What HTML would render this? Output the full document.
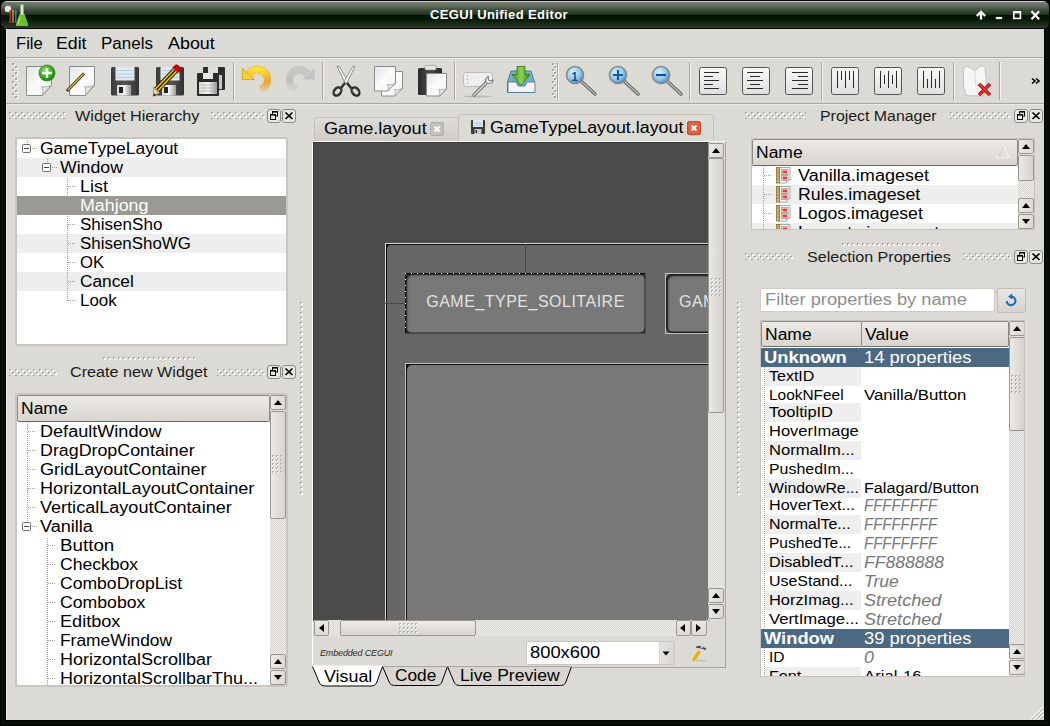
<!DOCTYPE html>
<html><head><meta charset="utf-8">
<style>
*{box-sizing:border-box;margin:0;padding:0}
html,body{width:1050px;height:726px;overflow:hidden;background:#021302;font-family:"Liberation Sans",sans-serif;color:#000}
.a{position:absolute}
#title{left:1px;top:1px;width:1048px;height:27px;border-radius:6px 6px 5px 5px;
 background:linear-gradient(#cfd4cb 0px,#cfd4cb 1px,#717d6f 1px,#606c5e 5px,#3c4c3a 9px,#243622 13px,#1e301c 14px,#001400 14px,#061806 18px,#1a2c18 23px,#2a3c28 27px)}
#ttext{left:430px;top:7px;color:#fff;font-weight:bold;font-size:13px;letter-spacing:0.4px}
#content{left:6px;top:29px;width:1038px;height:691px;background:#dcdad5;border-left:1px solid #efeeea;box-shadow:0 0 0 1px #000}
.t{font-size:15px;letter-spacing:1.35px;white-space:nowrap;line-height:19px}
.menu{top:34px;font-size:16px;white-space:nowrap;line-height:19px}
.hline{height:1px}
.vsep{width:2px;height:38px;top:62px;border-left:1px solid #a9a59f;border-right:1px solid #f4f3f1}
.grip{background-image:radial-gradient(circle at 50% 50%,#fff 0.8px,transparent 1px)}

.tree{background:#fff;border:1px solid #c6c3bd;box-shadow:inset 0 0 0 0 #000;overflow:hidden}
.row{position:absolute;left:0;height:19px;width:100%}
.alt{background:#eeeeee}
.tt{position:absolute;font-size:16px;line-height:19px;white-space:nowrap;top:0}
.dtitle{font-size:14px;line-height:17px;white-space:nowrap;color:#1a1a1a}
.dbtn{width:14px;height:14px;border:1px solid #8d8b87;border-radius:3px;background:#e9e7e3}
.exp{position:absolute;width:9px;height:9px;border:1px solid #6e6e6e;border-radius:1.5px;background:#fff}
.exp:after{content:"";position:absolute;left:1px;top:3px;width:5px;height:1px;background:#444}
.dv{position:absolute;width:1px;background-image:linear-gradient(#a0a0a0 50%,transparent 50%);background-size:1px 2px}
.dh{position:absolute;height:1px;background-image:linear-gradient(90deg,#a0a0a0 50%,transparent 50%);background-size:2px 1px}
.hdr{position:absolute;height:26px;background:linear-gradient(#ebe9e5,#d9d6d0);border:1px solid #8e8b85;border-bottom-color:#6e6b66;border-radius:2px}
.sb{position:absolute;width:16px;background:repeating-conic-gradient(#d8d6d1 0 25%,#eeece9 0 50%) 0 0/2px 2px}
.sbb{position:absolute;left:0;width:16px;height:15px;border:1px solid #9a9790;border-radius:2px;background:linear-gradient(90deg,#ebe9e5,#dcd9d3)}
.thumb{position:absolute;left:0;width:16px;border:1px solid #9a9790;border-radius:2px;background:linear-gradient(90deg,#ebe9e5,#d6d3cd)}
.up:after,.dn:after{content:"";position:absolute;left:3px;border-left:4px solid transparent;border-right:4px solid transparent}
.up:after{top:4px;border-bottom:5px solid #000}
.dn:after{top:4px;border-top:5px solid #000}
</style></head><body>
<div class="a" style="left:0;top:0;width:1050px;height:726px;border:1px solid #000"></div>
<div id="title" class="a"></div>
<div id="ttext" class="a">CEGUI Unified Editor</div>
<svg class="a" style="left:0px;top:0px" width="32" height="29"><circle cx="8" cy="9" r="3.2" fill="#e6e6e6"/><path d="M10.2 10v12" stroke="#b83a2a" stroke-width="1.4"/><path d="M13 10v12" stroke="#c8a840" stroke-width="1.4"/><path d="M15.8 10v12" stroke="#5a78b0" stroke-width="1.4"/><path d="M8.5 22.5h9" stroke="#7a4a20" stroke-width="0.8"/><path d="M20.5 4.5h3v8.5l4.5 12.5h-12l4.5-12.5z" fill="#dfe8d8" stroke="#7aa860" stroke-width="0.7"/><path d="M19.3 14.5h5.4l3.4 11h-12.2z" fill="#6cc02a"/><path d="M18 24.5l2-8" stroke="#c8f0a0" stroke-width="0.8"/></svg>
<svg class="a" style="left:970px;top:5px" width="80" height="20"><path d="M11 14.5V7.5M6.8 11L11 6.8l4.2 4.2" stroke="#fff" stroke-width="2.3" fill="none"/><path d="M25.8 13h6.4" stroke="#fff" stroke-width="2.2"/><rect x="43.8" y="6.8" width="6.6" height="6.6" fill="none" stroke="#fff" stroke-width="1.6"/><path d="M43.5 7.3h7.2" stroke="#fff" stroke-width="2"/><path d="M61.5 6.2l7.6 8M69.1 6.2l-7.6 8" stroke="#fff" stroke-width="2.2"/></svg>
<div id="content" class="a"></div>
<div class="a menu" style="left:16px;transform:scaleX(1.0385);transform-origin:0 0">File</div>
<div class="a menu" style="left:56px;transform:scaleX(1.1071);transform-origin:0 0">Edit</div>
<div class="a menu" style="left:101px;transform:scaleX(1.0612);transform-origin:0 0">Panels</div>
<div class="a menu" style="left:168px;transform:scaleX(1.119);transform-origin:0 0">About</div>
<div class="a hline" style="left:6px;top:57px;width:1038px;background:#aaa6a0"></div>
<div class="a hline" style="left:6px;top:58px;width:1038px;background:#eceae6"></div>
<div class="a hline" style="left:6px;top:103px;width:1038px;background:#aaa6a0"></div>
<div class="a hline" style="left:6px;top:104px;width:1038px;background:#eceae6"></div>
<div class="a vsep" style="left:233px"></div>
<div class="a vsep" style="left:322px"></div>
<div class="a vsep" style="left:454px"></div>
<div class="a vsep" style="left:557px"></div>
<div class="a vsep" style="left:689px"></div>
<div class="a vsep" style="left:821px"></div>
<div class="a vsep" style="left:953px"></div>
<div class="a vsep" style="left:999px"></div>
<svg class="a" style="left:0;top:0" width="1050" height="110" viewBox="0 0 1050 110">
<defs>
 <linearGradient id="pg" x1="0" y1="0" x2="1" y2="1"><stop offset="0" stop-color="#e2e4e6"/><stop offset="0.5" stop-color="#fbfbfb"/><stop offset="1" stop-color="#f2f2f2"/></linearGradient>
 <radialGradient id="gr" cx="0.4" cy="0.35" r="0.7"><stop offset="0" stop-color="#8fe36a"/><stop offset="0.6" stop-color="#3aa81e"/><stop offset="1" stop-color="#1d7a0c"/></radialGradient>
 <linearGradient id="fl" x1="0" y1="0" x2="1" y2="0"><stop offset="0" stop-color="#3b3b3b"/><stop offset="0.5" stop-color="#555"/><stop offset="1" stop-color="#333"/></linearGradient>
 <linearGradient id="sh" x1="0" y1="0" x2="1" y2="0"><stop offset="0" stop-color="#d8d8d8"/><stop offset="0.5" stop-color="#f4f4f4"/><stop offset="1" stop-color="#9a9a9a"/></linearGradient>
 <linearGradient id="yl" x1="0" y1="0" x2="1" y2="1"><stop offset="0" stop-color="#fbe76a"/><stop offset="0.6" stop-color="#f0b838"/><stop offset="1" stop-color="#e8a020" stop-opacity="0"/></linearGradient>
 <linearGradient id="gy" x1="0" y1="0" x2="0" y2="1"><stop offset="0" stop-color="#c4c4c4"/><stop offset="1" stop-color="#c8c8c8" stop-opacity="0.2"/></linearGradient>
 <radialGradient id="bl" cx="0.4" cy="0.35" r="0.7"><stop offset="0" stop-color="#e2f4fc"/><stop offset="0.6" stop-color="#8cc8ea"/><stop offset="1" stop-color="#3d7fc0"/></radialGradient>
 <linearGradient id="btn" x1="0" y1="0" x2="0" y2="1"><stop offset="0" stop-color="#fafafa"/><stop offset="1" stop-color="#dedede"/></linearGradient>
 <linearGradient id="grn" x1="0" y1="0" x2="1" y2="0"><stop offset="0" stop-color="#3f8f1a"/><stop offset="0.5" stop-color="#8ed44e"/><stop offset="1" stop-color="#3f8f1a"/></linearGradient>
</defs>
<!-- grip 1 -->
<g fill="#fff"><rect x="13" y="64" width="2" height="2"/><rect x="16" y="67" width="2" height="2"/><rect x="13" y="70" width="2" height="2"/><rect x="16" y="73" width="2" height="2"/><rect x="13" y="76" width="2" height="2"/><rect x="16" y="79" width="2" height="2"/><rect x="13" y="82" width="2" height="2"/><rect x="16" y="85" width="2" height="2"/><rect x="13" y="88" width="2" height="2"/><rect x="16" y="91" width="2" height="2"/><rect x="13" y="94" width="2" height="2"/><rect x="16" y="97" width="2" height="2"/></g>
<g fill="#a8a49e"><rect x="12" y="63" width="2" height="2"/><rect x="15" y="66" width="2" height="2"/><rect x="12" y="69" width="2" height="2"/><rect x="15" y="72" width="2" height="2"/><rect x="12" y="75" width="2" height="2"/><rect x="15" y="78" width="2" height="2"/><rect x="12" y="81" width="2" height="2"/><rect x="15" y="84" width="2" height="2"/><rect x="12" y="87" width="2" height="2"/><rect x="15" y="90" width="2" height="2"/><rect x="12" y="93" width="2" height="2"/><rect x="15" y="96" width="2" height="2"/></g>
<!-- new -->
<path d="M26.5 66.5h25v19l-9 10h-16z" fill="url(#pg)" stroke="#8a8a8a"/>
<path d="M42.5 95.5c1-4 0-8 -1-9c3 1 7 0 9-1z" fill="#e6e6e6" stroke="#9a9a9a" stroke-width="0.8"/>
<circle cx="47" cy="73" r="8" fill="url(#gr)" stroke="#1b6e0b" stroke-width="0.6"/>
<path d="M47 68v10M42 73h10" stroke="#fff" stroke-width="2.4"/>
<!-- edit -->
<path d="M69.5 66.5h25v19l-9 10h-16z" fill="url(#pg)" stroke="#8a8a8a"/>
<path d="M85.5 95.5c1-4 0-8 -1-9c3 1 7 0 9-1z" fill="#e6e6e6" stroke="#9a9a9a" stroke-width="0.8"/>
<path d="M67 91L84 73.5" stroke="#3a3010" stroke-width="3"/>
<path d="M68 90L83.5 74" stroke="#d8b040" stroke-width="1.4"/>
<!-- save -->
<g id="fsave">
<rect x="111" y="67" width="28" height="28.5" rx="1.5" fill="url(#fl)"/>
<rect x="115.5" y="67" width="19" height="13.5" fill="#dfe9f3"/>
<path d="M117 70.5h16M117 74h16M117 77.5h16" stroke="#a9bdd4" stroke-width="0.8"/>
<rect x="117" y="85" width="14" height="10.5" fill="url(#sh)"/>
<rect x="119" y="87" width="4" height="6" fill="#222"/>
</g>
<!-- save as -->
<g transform="translate(45 0)">
<rect x="111" y="67" width="28" height="28.5" rx="1.5" fill="url(#fl)"/>
<rect x="115.5" y="67" width="19" height="13.5" fill="#dfe9f3"/>
<path d="M117 70.5h16M117 74h16M117 77.5h16" stroke="#a9bdd4" stroke-width="0.8"/>
<rect x="117" y="85" width="14" height="10.5" fill="url(#sh)"/>
<rect x="119" y="87" width="4" height="6" fill="#222"/>
</g>
<path d="M156.5 90L175.5 70" stroke="#2a2200" stroke-width="6.4" stroke-linecap="butt"/>
<path d="M156.5 90L175.5 70" stroke="#f5c800" stroke-width="4.6"/>
<path d="M156.5 90L175.5 70" stroke="#1a1a1a" stroke-width="1.4"/>
<path d="M172.6 67.2l5.8 5.6l2.2-2.4c0.8-1 0.6-2.2-0.3-3l-2.2-2.1c-0.9-0.8-2.1-0.8-2.9 0z" fill="#d40000" stroke="#900" stroke-width="0.5"/>
<path d="M153.6 87.2l6.2 5.9l-6.6 3z" fill="#e8d0a0" stroke="#555" stroke-width="0.5"/>
<path d="M153 96.5l1.2-3.2l2 1.9z" fill="#222"/>
<!-- save all -->
<rect x="203" y="67" width="22" height="23" rx="1" fill="#2e2e2e"/>
<rect x="208" y="67" width="10" height="6" fill="#ddd"/>
<rect x="214" y="75" width="8" height="14" fill="#c8c8c8"/>
<rect x="197" y="73" width="22" height="23" rx="1" fill="#2b2b2b"/>
<rect x="203" y="73" width="10" height="6" fill="#e6e6e6"/>
<rect x="199" y="82" width="18" height="12" fill="url(#sh)"/>
<path d="M201 85h14M201 88h14M201 91h14" stroke="#999" stroke-width="0.6"/>
<!-- undo -->
<linearGradient id="ug" x1="0" y1="66" x2="0" y2="96" gradientUnits="userSpaceOnUse"><stop offset="0" stop-color="#fce94f"/><stop offset="0.3" stop-color="#f5c92e"/><stop offset="0.55" stop-color="#eea22a" stop-opacity="0.95"/><stop offset="0.8" stop-color="#eeb050" stop-opacity="0.4"/><stop offset="1" stop-color="#f0c060" stop-opacity="0"/></linearGradient>
<linearGradient id="rg" x1="0" y1="66" x2="0" y2="96" gradientUnits="userSpaceOnUse"><stop offset="0" stop-color="#c8c8c8"/><stop offset="0.5" stop-color="#bdbdbd" stop-opacity="0.9"/><stop offset="0.8" stop-color="#c4c4c4" stop-opacity="0.35"/><stop offset="1" stop-color="#ccc" stop-opacity="0"/></linearGradient>
<g id="undoShape">
<path d="M246.5 71.5A13.5 13.5 0 0 1 271 80.5A13.5 13.5 0 0 1 262 93L259 86A6.5 6.5 0 0 0 264 80A6.5 6.5 0 0 0 252.5 76.5Z" fill="url(#ug)"/>
<path d="M242.3 68.3L242.3 79.6L254.5 79.6Z" fill="#f4d030" stroke="#c89a08" stroke-width="0.7"/>
<path d="M246.5 71.5A13.5 13.5 0 0 1 270.5 78" fill="none" stroke="#c89010" stroke-width="0.6" opacity="0.7"/>
</g>
<g transform="translate(557 0) scale(-1 1)">
<path d="M246.5 71.5A13.5 13.5 0 0 1 271 80.5A13.5 13.5 0 0 1 262 93L259 86A6.5 6.5 0 0 0 264 80A6.5 6.5 0 0 0 252.5 76.5Z" fill="url(#rg)"/>
<path d="M242.3 68.3L242.3 79.6L254.5 79.6Z" fill="#c2c2c2"/>
</g>
<!-- cut -->
<path d="M337 66.2L339.3 66.8L348 81.5L345.3 83.5Z" fill="#fdfdfd" stroke="#666" stroke-width="0.7"/>
<path d="M355 66.2L352.7 66.8L344 81.5L346.7 83.5Z" fill="#fdfdfd" stroke="#666" stroke-width="0.7"/>
<path d="M345 83L340.5 88.5M347 83L351.5 88.5" stroke="#333" stroke-width="2.6"/>
<ellipse cx="337.5" cy="91.5" rx="4.6" ry="3.3" fill="none" stroke="#333" stroke-width="2.4" transform="rotate(-50 337.5 91.5)"/>
<ellipse cx="355.5" cy="91.5" rx="4.6" ry="3.3" fill="none" stroke="#333" stroke-width="2.4" transform="rotate(50 355.5 91.5)"/>
<!-- copy -->
<path d="M381.5 71.5h21v17l-7.5 7.5h-13.5z" fill="url(#pg)" stroke="#8a8a8a"/>
<path d="M395 96c0.8-3 0-5.5-0.8-6.5c2.5 0.6 5.5 0 7.8-1z" fill="#e6e6e6" stroke="#9a9a9a" stroke-width="0.7"/>
<path d="M374.5 66.5h21v17l-7.5 7.5h-13.5z" fill="url(#pg)" stroke="#8a8a8a"/>
<path d="M388 91c0.8-3 0-5.5-0.8-6.5c2.5 0.6 5.5 0 7.8-1z" fill="#e6e6e6" stroke="#9a9a9a" stroke-width="0.7"/>
<!-- paste -->
<linearGradient id="cb" x1="0" y1="0" x2="1" y2="0"><stop offset="0" stop-color="#2a2a2a"/><stop offset="0.5" stop-color="#4a4a4a"/><stop offset="1" stop-color="#2a2a2a"/></linearGradient>
<rect x="418" y="68" width="24" height="27" rx="1.5" fill="url(#cb)"/>
<rect x="425" y="65.5" width="11" height="4.5" rx="1" fill="#e8e8e8" stroke="#8a8a8a" stroke-width="0.6"/>
<path d="M426.5 73.5h20v15.5l-6.5 7h-13.5z" fill="url(#pg)" stroke="#8a8a8a"/>
<path d="M439.5 96c0.8-3 0-5.5-0.8-6.5c2.5 0.6 5.5 0 7.8-1z" fill="#e6e6e6" stroke="#9a9a9a" stroke-width="0.7"/>
<!-- props/wrench -->
<rect x="463.5" y="72.5" width="29" height="14" rx="2.5" fill="#eeeeee" stroke="#bdbdbd"/>
<g fill="#888"><circle cx="467.5" cy="76" r="0.6"/><circle cx="467.5" cy="79.5" r="0.6"/><circle cx="467.5" cy="83" r="0.6"/></g>
<ellipse cx="478" cy="96.5" rx="14" ry="1" fill="#000" opacity="0.15"/>
<path d="M474 95l13.5-13.5" stroke="#6a6a6a" stroke-width="3.2" stroke-linecap="round"/>
<path d="M474 95l13.5-13.5" stroke="#e8e8e8" stroke-width="1.4" stroke-linecap="round"/>
<path d="M486.2 82.8a4.6 4.6 0 0 1 2.2-6.6l-0.2 3.2l2 1.6l3-1.2a4.6 4.6 0 0 1-6.6 3.6" fill="#e6e6e6" stroke="#6a6a6a" stroke-width="1"/>
<!-- import -->
<path d="M511 71h20l3.5 11v10.5h-27v-10.5z" fill="#6fb0c8" stroke="#40708a" stroke-width="0.8"/>
<path d="M508 82h8l2 4h7l2-4h8v10.5h-27z" fill="#f4f4f4" stroke="#40708a" stroke-width="0.8"/>
<path d="M517 66.5h8v8h5l-9 11l-9-11h5z" fill="url(#grn)" stroke="#2f6e10" stroke-width="0.8"/>
<!-- grip 2 -->
<g fill="#fff"><rect x="553" y="64" width="2" height="2"/><rect x="555" y="67" width="2" height="2"/><rect x="553" y="70" width="2" height="2"/><rect x="555" y="73" width="2" height="2"/><rect x="553" y="76" width="2" height="2"/><rect x="555" y="79" width="2" height="2"/><rect x="553" y="82" width="2" height="2"/><rect x="555" y="85" width="2" height="2"/><rect x="553" y="88" width="2" height="2"/><rect x="555" y="91" width="2" height="2"/><rect x="553" y="94" width="2" height="2"/><rect x="555" y="97" width="2" height="2"/></g>
<g fill="#a8a49e"><rect x="552" y="63" width="2" height="2"/><rect x="554" y="66" width="2" height="2"/><rect x="552" y="69" width="2" height="2"/><rect x="554" y="72" width="2" height="2"/><rect x="552" y="75" width="2" height="2"/><rect x="554" y="78" width="2" height="2"/><rect x="552" y="81" width="2" height="2"/><rect x="554" y="84" width="2" height="2"/><rect x="552" y="87" width="2" height="2"/><rect x="554" y="90" width="2" height="2"/><rect x="552" y="93" width="2" height="2"/><rect x="554" y="96" width="2" height="2"/></g>
<!-- zoom -->
<g id="zm">
<path d="M581 81l14 13" stroke="#666" stroke-width="3.4" stroke-linecap="round"/>
<path d="M581 81l14 13" stroke="#bbb" stroke-width="1.4" stroke-linecap="round"/>
<circle cx="575" cy="75" r="8.5" fill="url(#bl)" stroke="#8a8a8a" stroke-width="1.6"/>
</g>
<text x="571.3" y="80.5" font-family="Liberation Sans" font-weight="bold" font-size="12" fill="#1a4f9a">1</text>
<g transform="translate(43 0)">
<path d="M581 81l14 13" stroke="#666" stroke-width="3.4" stroke-linecap="round"/>
<path d="M581 81l14 13" stroke="#bbb" stroke-width="1.4" stroke-linecap="round"/>
<circle cx="575" cy="75" r="8.5" fill="url(#bl)" stroke="#8a8a8a" stroke-width="1.6"/>
</g>
<path d="M618 70v10M613 75h10" stroke="#1a55a0" stroke-width="2.2"/>
<g transform="translate(86 0)">
<path d="M581 81l14 13" stroke="#666" stroke-width="3.4" stroke-linecap="round"/>
<path d="M581 81l14 13" stroke="#bbb" stroke-width="1.4" stroke-linecap="round"/>
<circle cx="575" cy="75" r="8.5" fill="url(#bl)" stroke="#8a8a8a" stroke-width="1.6"/>
</g>
<path d="M656 75h10" stroke="#1a4f9a" stroke-width="2.2"/>
<!-- align buttons -->
<g id="ab"><rect x="699.5" y="67.5" width="27" height="27" rx="2" fill="url(#btn)" stroke="#555" stroke-width="1"/></g>
<path d="M704 72.5h15M704 76.5h9M704 80.5h15M704 84.5h9M704 88.5h15" stroke="#2a2a2a" stroke-width="1"/>
<g transform="translate(43 0)"><rect x="699.5" y="67.5" width="27" height="27" rx="2" fill="url(#btn)" stroke="#555" stroke-width="1"/></g>
<path d="M747 72.5h16M750 76.5h10M747 80.5h16M750 84.5h10M747 88.5h16" stroke="#2a2a2a" stroke-width="1"/>
<g transform="translate(86 0)"><rect x="699.5" y="67.5" width="27" height="27" rx="2" fill="url(#btn)" stroke="#555" stroke-width="1"/></g>
<path d="M792 72.5h16M798 76.5h10M792 80.5h16M798 84.5h10M792 88.5h16" stroke="#2a2a2a" stroke-width="1"/>
<g transform="translate(132 0)"><rect x="699.5" y="67.5" width="27" height="27" rx="2" fill="url(#btn)" stroke="#555" stroke-width="1"/></g>
<path d="M837.5 71v17M841.5 71v9M845.5 71v17M849.5 71v9M853.5 71v17" stroke="#2a2a2a" stroke-width="1"/>
<g transform="translate(175 0)"><rect x="699.5" y="67.5" width="27" height="27" rx="2" fill="url(#btn)" stroke="#555" stroke-width="1"/></g>
<path d="M880.5 71v17M884.5 75v9M888.5 71v17M892.5 75v9M896.5 71v17" stroke="#2a2a2a" stroke-width="1"/>
<g transform="translate(218 0)"><rect x="699.5" y="67.5" width="27" height="27" rx="2" fill="url(#btn)" stroke="#555" stroke-width="1"/></g>
<path d="M923.5 71v17M927.5 79v9M931.5 71v17M935.5 79v9M939.5 71v17" stroke="#2a2a2a" stroke-width="1"/>
<!-- delete -->
<path d="M963.5 68.5L967 66L974.5 70.5L982 65.5L985 67.5L986.5 85L983.5 96L966.5 95.5L963.5 86Z" fill="#f6f6f6" stroke="#b8b8b8" stroke-width="0.8"/>
<path d="M974.5 71L976 86" stroke="#dedede" stroke-width="1"/>
<path d="M979 84l11 11M990 84l-11 11" stroke="#c01010" stroke-width="3.6"/>
<path d="M979 84l11 11M990 84l-11 11" stroke="#e83030" stroke-width="1.6"/>
<!-- chevron -->
<path d="M1032 78.5l3 2.5l-3 2.5M1036 78.5l3 2.5l-3 2.5" stroke="#000" stroke-width="1.6" fill="none"/>
</svg>

<svg class="a" style="left:9px;top:112px" width="56" height="7"><defs><pattern id="gp9_112" patternUnits="userSpaceOnUse" width="6" height="6"><rect x="0" y="0" width="2" height="2" fill="#a9a6a0"/><rect x="1" y="1" width="2" height="2" fill="#fff"/><rect x="3" y="3" width="2" height="2" fill="#a9a6a0"/><rect x="4" y="4" width="2" height="2" fill="#fff"/></pattern></defs><rect width="56" height="7" fill="url(#gp9_112)"/></svg>
<div class="a dtitle" style="left:75px;top:108px;transform:scaleX(1.1591);transform-origin:0 0">Widget Hierarchy</div>
<svg class="a" style="left:211px;top:112px" width="54" height="7"><defs><pattern id="gp211_112" patternUnits="userSpaceOnUse" width="6" height="6"><rect x="0" y="0" width="2" height="2" fill="#a9a6a0"/><rect x="1" y="1" width="2" height="2" fill="#fff"/><rect x="3" y="3" width="2" height="2" fill="#a9a6a0"/><rect x="4" y="4" width="2" height="2" fill="#fff"/></pattern></defs><rect width="54" height="7" fill="url(#gp211_112)"/></svg>
<div class="a dbtn" style="left:267px;top:109px"></div><div class="a dbtn" style="left:282px;top:109px"></div><svg class="a" style="left:267px;top:109px" width="14" height="14"><rect x="5.5" y="2.5" width="5" height="4.5" fill="none" stroke="#000" stroke-width="1"/><rect x="5" y="2" width="6" height="1.6" fill="#000"/><rect x="3.5" y="5.5" width="5" height="5" fill="#ece9e4" stroke="#000" stroke-width="1"/><rect x="3" y="5" width="6" height="1.6" fill="#000"/></svg><svg class="a" style="left:282px;top:109px" width="14" height="14"><path d="M3.5 3.5l7 6.5M10.5 3.5l-7 6.5" stroke="#000" stroke-width="1.7"/></svg>
<div class="a tree" style="left:15px;top:137px;width:273px;height:209px;border-width:2px;border-color:#c9c6c0;border-radius:3px"><div style="position:absolute;left:-1px;top:0;width:270px;height:205px"><div class="row" style="top:0px"></div><div class="tt" style="left:24px;top:0px;color:#000;transform:scaleX(1.0945);transform-origin:0 0">GameTypeLayout</div><div class="row" style="top:19px;background:#eeeeee"></div><div class="tt" style="left:44px;top:19px;color:#000;transform:scaleX(1.1053);transform-origin:0 0">Window</div><div class="row" style="top:38px"></div><div class="tt" style="left:64px;top:38px;color:#000;transform:scaleX(1.12);transform-origin:0 0">List</div><div class="row" style="top:57px;background:#9b9994"></div><div class="tt" style="left:64px;top:57px;color:#fff;transform:scaleX(1.1148);transform-origin:0 0">Mahjong</div><div class="row" style="top:76px"></div><div class="tt" style="left:64px;top:76px;color:#000;transform:scaleX(1.0641);transform-origin:0 0">ShisenSho</div><div class="row" style="top:95px;background:#eeeeee"></div><div class="tt" style="left:64px;top:95px;color:#000;transform:scaleX(1.0571);transform-origin:0 0">ShisenShoWG</div><div class="row" style="top:114px"></div><div class="tt" style="left:64px;top:114px;color:#000;transform:scaleX(1.0435);transform-origin:0 0">OK</div><div class="row" style="top:133px;background:#eeeeee"></div><div class="tt" style="left:64px;top:133px;color:#000;transform:scaleX(1.08);transform-origin:0 0">Cancel</div><div class="row" style="top:152px"></div><div class="tt" style="left:64px;top:152px;color:#000;transform:scaleX(1.0556);transform-origin:0 0">Look</div><div class="dv" style="left:11px;top:1px;height:4px"></div><div class="exp" style="left:6px;top:5px"></div><div class="dh" style="left:16px;top:9px;width:5px"></div><div class="dv" style="left:31px;top:20px;height:4px"></div><div class="exp" style="left:26px;top:24px"></div><div class="dh" style="left:36px;top:28px;width:5px"></div><div class="dv" style="left:51px;top:39px;height:124px"></div><div class="dh" style="left:52px;top:47px;width:7px"></div><div class="dh" style="left:52px;top:66px;width:7px"></div><div class="dh" style="left:52px;top:85px;width:7px"></div><div class="dh" style="left:52px;top:104px;width:7px"></div><div class="dh" style="left:52px;top:123px;width:7px"></div><div class="dh" style="left:52px;top:142px;width:7px"></div><div class="dh" style="left:52px;top:161px;width:7px"></div></div></div>
<svg class="a" style="left:103px;top:357px" width="95" height="4"><rect x="0" y="0" width="2" height="2" fill="#a9a6a0"/><rect x="1" y="1" width="2" height="2" fill="#fff"/><rect x="5" y="0" width="2" height="2" fill="#a9a6a0"/><rect x="6" y="1" width="2" height="2" fill="#fff"/><rect x="10" y="0" width="2" height="2" fill="#a9a6a0"/><rect x="11" y="1" width="2" height="2" fill="#fff"/><rect x="15" y="0" width="2" height="2" fill="#a9a6a0"/><rect x="16" y="1" width="2" height="2" fill="#fff"/><rect x="20" y="0" width="2" height="2" fill="#a9a6a0"/><rect x="21" y="1" width="2" height="2" fill="#fff"/><rect x="25" y="0" width="2" height="2" fill="#a9a6a0"/><rect x="26" y="1" width="2" height="2" fill="#fff"/><rect x="30" y="0" width="2" height="2" fill="#a9a6a0"/><rect x="31" y="1" width="2" height="2" fill="#fff"/><rect x="35" y="0" width="2" height="2" fill="#a9a6a0"/><rect x="36" y="1" width="2" height="2" fill="#fff"/><rect x="40" y="0" width="2" height="2" fill="#a9a6a0"/><rect x="41" y="1" width="2" height="2" fill="#fff"/><rect x="45" y="0" width="2" height="2" fill="#a9a6a0"/><rect x="46" y="1" width="2" height="2" fill="#fff"/><rect x="50" y="0" width="2" height="2" fill="#a9a6a0"/><rect x="51" y="1" width="2" height="2" fill="#fff"/><rect x="55" y="0" width="2" height="2" fill="#a9a6a0"/><rect x="56" y="1" width="2" height="2" fill="#fff"/><rect x="60" y="0" width="2" height="2" fill="#a9a6a0"/><rect x="61" y="1" width="2" height="2" fill="#fff"/><rect x="65" y="0" width="2" height="2" fill="#a9a6a0"/><rect x="66" y="1" width="2" height="2" fill="#fff"/><rect x="70" y="0" width="2" height="2" fill="#a9a6a0"/><rect x="71" y="1" width="2" height="2" fill="#fff"/><rect x="75" y="0" width="2" height="2" fill="#a9a6a0"/><rect x="76" y="1" width="2" height="2" fill="#fff"/><rect x="80" y="0" width="2" height="2" fill="#a9a6a0"/><rect x="81" y="1" width="2" height="2" fill="#fff"/><rect x="85" y="0" width="2" height="2" fill="#a9a6a0"/><rect x="86" y="1" width="2" height="2" fill="#fff"/><rect x="90" y="0" width="2" height="2" fill="#a9a6a0"/><rect x="91" y="1" width="2" height="2" fill="#fff"/></svg>
<svg class="a" style="left:9px;top:369px" width="48" height="7"><defs><pattern id="gp9_369" patternUnits="userSpaceOnUse" width="6" height="6"><rect x="0" y="0" width="2" height="2" fill="#a9a6a0"/><rect x="1" y="1" width="2" height="2" fill="#fff"/><rect x="3" y="3" width="2" height="2" fill="#a9a6a0"/><rect x="4" y="4" width="2" height="2" fill="#fff"/></pattern></defs><rect width="48" height="7" fill="url(#gp9_369)"/></svg>
<div class="a dtitle" style="left:70px;top:364px;transform:scaleX(1.1542);transform-origin:0 0">Create new Widget</div>
<svg class="a" style="left:217px;top:369px" width="48" height="7"><defs><pattern id="gp217_369" patternUnits="userSpaceOnUse" width="6" height="6"><rect x="0" y="0" width="2" height="2" fill="#a9a6a0"/><rect x="1" y="1" width="2" height="2" fill="#fff"/><rect x="3" y="3" width="2" height="2" fill="#a9a6a0"/><rect x="4" y="4" width="2" height="2" fill="#fff"/></pattern></defs><rect width="48" height="7" fill="url(#gp217_369)"/></svg>
<div class="a dbtn" style="left:267px;top:365px"></div><div class="a dbtn" style="left:282px;top:365px"></div><svg class="a" style="left:267px;top:365px" width="14" height="14"><rect x="5.5" y="2.5" width="5" height="4.5" fill="none" stroke="#000" stroke-width="1"/><rect x="5" y="2" width="6" height="1.6" fill="#000"/><rect x="3.5" y="5.5" width="5" height="5" fill="#ece9e4" stroke="#000" stroke-width="1"/><rect x="3" y="5" width="6" height="1.6" fill="#000"/></svg><svg class="a" style="left:282px;top:365px" width="14" height="14"><path d="M3.5 3.5l7 6.5M10.5 3.5l-7 6.5" stroke="#000" stroke-width="1.7"/></svg>
<div class="a tree" style="left:15px;top:393px;width:273px;height:294px;border-width:2px;border-color:#c9c6c0;border-radius:3px"><div style="position:absolute;left:-1px;top:0;width:271px;height:290px"><div class="hdr" style="left:1px;top:0px;width:253px;height:27px"></div><div class="tt" style="left:5px;top:4px;transform:scaleX(1.093);transform-origin:0 0">Name</div><div class="tt" style="left:24px;top:27px;transform:scaleX(1.1296);transform-origin:0 0">DefaultWindow</div><div class="tt" style="left:24px;top:46px;transform:scaleX(1.1143);transform-origin:0 0">DragDropContainer</div><div class="tt" style="left:24px;top:65px;transform:scaleX(1.1284);transform-origin:0 0">GridLayoutContainer</div><div class="tt" style="left:24px;top:84px;transform:scaleX(1.1316);transform-origin:0 0">HorizontalLayoutContainer</div><div class="tt" style="left:24px;top:103px;transform:scaleX(1.1287);transform-origin:0 0">VerticalLayoutContainer</div><div class="tt" style="left:24px;top:122px;transform:scaleX(1.1277);transform-origin:0 0">Vanilla</div><div class="tt" style="left:44px;top:141px;transform:scaleX(1.1739);transform-origin:0 0">Button</div><div class="tt" style="left:44px;top:160px;transform:scaleX(1.0986);transform-origin:0 0">Checkbox</div><div class="tt" style="left:44px;top:179px;transform:scaleX(1.0982);transform-origin:0 0">ComboDropList</div><div class="tt" style="left:44px;top:198px;transform:scaleX(1.1039);transform-origin:0 0">Combobox</div><div class="tt" style="left:44px;top:217px;transform:scaleX(1.1321);transform-origin:0 0">Editbox</div><div class="tt" style="left:44px;top:236px;transform:scaleX(1.0865);transform-origin:0 0">FrameWindow</div><div class="tt" style="left:44px;top:255px;transform:scaleX(1.125);transform-origin:0 0">HorizontalScrollbar</div><div class="tt" style="left:44px;top:274px;transform:scaleX(1.125);transform-origin:0 0">HorizontalScrollbarThu...</div><div class="dv" style="left:11px;top:27px;height:99px"></div><div class="dh" style="left:12px;top:36px;width:8px"></div><div class="dh" style="left:12px;top:55px;width:8px"></div><div class="dh" style="left:12px;top:74px;width:8px"></div><div class="dh" style="left:12px;top:93px;width:8px"></div><div class="dh" style="left:12px;top:112px;width:8px"></div><div class="exp" style="left:6px;top:127px"></div><div class="dh" style="left:16px;top:131px;width:5px"></div><div class="dv" style="left:31px;top:143px;height:150px"></div><div class="dh" style="left:32px;top:150px;width:7px"></div><div class="dh" style="left:32px;top:169px;width:7px"></div><div class="dh" style="left:32px;top:188px;width:7px"></div><div class="dh" style="left:32px;top:207px;width:7px"></div><div class="dh" style="left:32px;top:226px;width:7px"></div><div class="dh" style="left:32px;top:245px;width:7px"></div><div class="dh" style="left:32px;top:264px;width:7px"></div><div class="dh" style="left:32px;top:283px;width:7px"></div><div class="sb" style="left:254px;top:0px;height:291px"><div class="sbb up" style="top:0px"></div><div class="thumb" style="top:16px;height:108px"></div><div class="sbb up" style="top:259px"></div><div class="sbb dn" style="top:275px"></div></div></div></div>
<svg class="a" style="left:300px;top:302px" width="4" height="195"><rect x="0" y="0" width="2" height="2" fill="#a9a6a0"/><rect x="1" y="1" width="2" height="2" fill="#fff"/><rect x="0" y="5" width="2" height="2" fill="#a9a6a0"/><rect x="1" y="6" width="2" height="2" fill="#fff"/><rect x="0" y="10" width="2" height="2" fill="#a9a6a0"/><rect x="1" y="11" width="2" height="2" fill="#fff"/><rect x="0" y="15" width="2" height="2" fill="#a9a6a0"/><rect x="1" y="16" width="2" height="2" fill="#fff"/><rect x="0" y="20" width="2" height="2" fill="#a9a6a0"/><rect x="1" y="21" width="2" height="2" fill="#fff"/><rect x="0" y="25" width="2" height="2" fill="#a9a6a0"/><rect x="1" y="26" width="2" height="2" fill="#fff"/><rect x="0" y="30" width="2" height="2" fill="#a9a6a0"/><rect x="1" y="31" width="2" height="2" fill="#fff"/><rect x="0" y="35" width="2" height="2" fill="#a9a6a0"/><rect x="1" y="36" width="2" height="2" fill="#fff"/><rect x="0" y="40" width="2" height="2" fill="#a9a6a0"/><rect x="1" y="41" width="2" height="2" fill="#fff"/><rect x="0" y="45" width="2" height="2" fill="#a9a6a0"/><rect x="1" y="46" width="2" height="2" fill="#fff"/><rect x="0" y="50" width="2" height="2" fill="#a9a6a0"/><rect x="1" y="51" width="2" height="2" fill="#fff"/><rect x="0" y="55" width="2" height="2" fill="#a9a6a0"/><rect x="1" y="56" width="2" height="2" fill="#fff"/><rect x="0" y="60" width="2" height="2" fill="#a9a6a0"/><rect x="1" y="61" width="2" height="2" fill="#fff"/><rect x="0" y="65" width="2" height="2" fill="#a9a6a0"/><rect x="1" y="66" width="2" height="2" fill="#fff"/><rect x="0" y="70" width="2" height="2" fill="#a9a6a0"/><rect x="1" y="71" width="2" height="2" fill="#fff"/><rect x="0" y="75" width="2" height="2" fill="#a9a6a0"/><rect x="1" y="76" width="2" height="2" fill="#fff"/><rect x="0" y="80" width="2" height="2" fill="#a9a6a0"/><rect x="1" y="81" width="2" height="2" fill="#fff"/><rect x="0" y="85" width="2" height="2" fill="#a9a6a0"/><rect x="1" y="86" width="2" height="2" fill="#fff"/><rect x="0" y="90" width="2" height="2" fill="#a9a6a0"/><rect x="1" y="91" width="2" height="2" fill="#fff"/><rect x="0" y="95" width="2" height="2" fill="#a9a6a0"/><rect x="1" y="96" width="2" height="2" fill="#fff"/><rect x="0" y="100" width="2" height="2" fill="#a9a6a0"/><rect x="1" y="101" width="2" height="2" fill="#fff"/><rect x="0" y="105" width="2" height="2" fill="#a9a6a0"/><rect x="1" y="106" width="2" height="2" fill="#fff"/><rect x="0" y="110" width="2" height="2" fill="#a9a6a0"/><rect x="1" y="111" width="2" height="2" fill="#fff"/><rect x="0" y="115" width="2" height="2" fill="#a9a6a0"/><rect x="1" y="116" width="2" height="2" fill="#fff"/><rect x="0" y="120" width="2" height="2" fill="#a9a6a0"/><rect x="1" y="121" width="2" height="2" fill="#fff"/><rect x="0" y="125" width="2" height="2" fill="#a9a6a0"/><rect x="1" y="126" width="2" height="2" fill="#fff"/><rect x="0" y="130" width="2" height="2" fill="#a9a6a0"/><rect x="1" y="131" width="2" height="2" fill="#fff"/><rect x="0" y="135" width="2" height="2" fill="#a9a6a0"/><rect x="1" y="136" width="2" height="2" fill="#fff"/><rect x="0" y="140" width="2" height="2" fill="#a9a6a0"/><rect x="1" y="141" width="2" height="2" fill="#fff"/><rect x="0" y="145" width="2" height="2" fill="#a9a6a0"/><rect x="1" y="146" width="2" height="2" fill="#fff"/><rect x="0" y="150" width="2" height="2" fill="#a9a6a0"/><rect x="1" y="151" width="2" height="2" fill="#fff"/><rect x="0" y="155" width="2" height="2" fill="#a9a6a0"/><rect x="1" y="156" width="2" height="2" fill="#fff"/><rect x="0" y="160" width="2" height="2" fill="#a9a6a0"/><rect x="1" y="161" width="2" height="2" fill="#fff"/><rect x="0" y="165" width="2" height="2" fill="#a9a6a0"/><rect x="1" y="166" width="2" height="2" fill="#fff"/><rect x="0" y="170" width="2" height="2" fill="#a9a6a0"/><rect x="1" y="171" width="2" height="2" fill="#fff"/><rect x="0" y="175" width="2" height="2" fill="#a9a6a0"/><rect x="1" y="176" width="2" height="2" fill="#fff"/><rect x="0" y="180" width="2" height="2" fill="#a9a6a0"/><rect x="1" y="181" width="2" height="2" fill="#fff"/><rect x="0" y="185" width="2" height="2" fill="#a9a6a0"/><rect x="1" y="186" width="2" height="2" fill="#fff"/><rect x="0" y="190" width="2" height="2" fill="#a9a6a0"/><rect x="1" y="191" width="2" height="2" fill="#fff"/></svg>
<svg class="a" style="left:737px;top:302px" width="4" height="195"><rect x="0" y="0" width="2" height="2" fill="#a9a6a0"/><rect x="1" y="1" width="2" height="2" fill="#fff"/><rect x="0" y="5" width="2" height="2" fill="#a9a6a0"/><rect x="1" y="6" width="2" height="2" fill="#fff"/><rect x="0" y="10" width="2" height="2" fill="#a9a6a0"/><rect x="1" y="11" width="2" height="2" fill="#fff"/><rect x="0" y="15" width="2" height="2" fill="#a9a6a0"/><rect x="1" y="16" width="2" height="2" fill="#fff"/><rect x="0" y="20" width="2" height="2" fill="#a9a6a0"/><rect x="1" y="21" width="2" height="2" fill="#fff"/><rect x="0" y="25" width="2" height="2" fill="#a9a6a0"/><rect x="1" y="26" width="2" height="2" fill="#fff"/><rect x="0" y="30" width="2" height="2" fill="#a9a6a0"/><rect x="1" y="31" width="2" height="2" fill="#fff"/><rect x="0" y="35" width="2" height="2" fill="#a9a6a0"/><rect x="1" y="36" width="2" height="2" fill="#fff"/><rect x="0" y="40" width="2" height="2" fill="#a9a6a0"/><rect x="1" y="41" width="2" height="2" fill="#fff"/><rect x="0" y="45" width="2" height="2" fill="#a9a6a0"/><rect x="1" y="46" width="2" height="2" fill="#fff"/><rect x="0" y="50" width="2" height="2" fill="#a9a6a0"/><rect x="1" y="51" width="2" height="2" fill="#fff"/><rect x="0" y="55" width="2" height="2" fill="#a9a6a0"/><rect x="1" y="56" width="2" height="2" fill="#fff"/><rect x="0" y="60" width="2" height="2" fill="#a9a6a0"/><rect x="1" y="61" width="2" height="2" fill="#fff"/><rect x="0" y="65" width="2" height="2" fill="#a9a6a0"/><rect x="1" y="66" width="2" height="2" fill="#fff"/><rect x="0" y="70" width="2" height="2" fill="#a9a6a0"/><rect x="1" y="71" width="2" height="2" fill="#fff"/><rect x="0" y="75" width="2" height="2" fill="#a9a6a0"/><rect x="1" y="76" width="2" height="2" fill="#fff"/><rect x="0" y="80" width="2" height="2" fill="#a9a6a0"/><rect x="1" y="81" width="2" height="2" fill="#fff"/><rect x="0" y="85" width="2" height="2" fill="#a9a6a0"/><rect x="1" y="86" width="2" height="2" fill="#fff"/><rect x="0" y="90" width="2" height="2" fill="#a9a6a0"/><rect x="1" y="91" width="2" height="2" fill="#fff"/><rect x="0" y="95" width="2" height="2" fill="#a9a6a0"/><rect x="1" y="96" width="2" height="2" fill="#fff"/><rect x="0" y="100" width="2" height="2" fill="#a9a6a0"/><rect x="1" y="101" width="2" height="2" fill="#fff"/><rect x="0" y="105" width="2" height="2" fill="#a9a6a0"/><rect x="1" y="106" width="2" height="2" fill="#fff"/><rect x="0" y="110" width="2" height="2" fill="#a9a6a0"/><rect x="1" y="111" width="2" height="2" fill="#fff"/><rect x="0" y="115" width="2" height="2" fill="#a9a6a0"/><rect x="1" y="116" width="2" height="2" fill="#fff"/><rect x="0" y="120" width="2" height="2" fill="#a9a6a0"/><rect x="1" y="121" width="2" height="2" fill="#fff"/><rect x="0" y="125" width="2" height="2" fill="#a9a6a0"/><rect x="1" y="126" width="2" height="2" fill="#fff"/><rect x="0" y="130" width="2" height="2" fill="#a9a6a0"/><rect x="1" y="131" width="2" height="2" fill="#fff"/><rect x="0" y="135" width="2" height="2" fill="#a9a6a0"/><rect x="1" y="136" width="2" height="2" fill="#fff"/><rect x="0" y="140" width="2" height="2" fill="#a9a6a0"/><rect x="1" y="141" width="2" height="2" fill="#fff"/><rect x="0" y="145" width="2" height="2" fill="#a9a6a0"/><rect x="1" y="146" width="2" height="2" fill="#fff"/><rect x="0" y="150" width="2" height="2" fill="#a9a6a0"/><rect x="1" y="151" width="2" height="2" fill="#fff"/><rect x="0" y="155" width="2" height="2" fill="#a9a6a0"/><rect x="1" y="156" width="2" height="2" fill="#fff"/><rect x="0" y="160" width="2" height="2" fill="#a9a6a0"/><rect x="1" y="161" width="2" height="2" fill="#fff"/><rect x="0" y="165" width="2" height="2" fill="#a9a6a0"/><rect x="1" y="166" width="2" height="2" fill="#fff"/><rect x="0" y="170" width="2" height="2" fill="#a9a6a0"/><rect x="1" y="171" width="2" height="2" fill="#fff"/><rect x="0" y="175" width="2" height="2" fill="#a9a6a0"/><rect x="1" y="176" width="2" height="2" fill="#fff"/><rect x="0" y="180" width="2" height="2" fill="#a9a6a0"/><rect x="1" y="181" width="2" height="2" fill="#fff"/><rect x="0" y="185" width="2" height="2" fill="#a9a6a0"/><rect x="1" y="186" width="2" height="2" fill="#fff"/><rect x="0" y="190" width="2" height="2" fill="#a9a6a0"/><rect x="1" y="191" width="2" height="2" fill="#fff"/></svg>
<div class="a" style="left:314px;top:117px;width:145px;height:24px;border:1px solid #c4c1bb;border-bottom:none;border-radius:3px 3px 0 0;background:linear-gradient(#dedcd8,#cfccc7)"></div>
<div class="a tt" style="left:324px;top:119px;transform:scaleX(1.1319);transform-origin:0 0">Game.layout</div>
<svg class="a" style="left:430px;top:122px" width="14" height="14"><rect x="0.5" y="0.5" width="13" height="13" rx="1.5" fill="#c3c1bd" stroke="#b0aea9"/><path d="M4.5 4.5l5 5M9.5 4.5l-5 5" stroke="#fff" stroke-width="1.8"/></svg>
<div class="a" style="left:458px;top:114px;width:256px;height:28px;border:1px solid #c4c1bb;border-bottom:none;border-radius:4px 4px 0 0;background:#dcdad5"></div>
<svg class="a" style="left:471px;top:120px" width="14" height="14"><rect x="0" y="0" width="14" height="14" rx="1" fill="#3a3a3a"/><rect x="2" y="0" width="10" height="7" fill="#e2ecf6"/><path d="M3 3h8M3 5h8" stroke="#aabfd6" stroke-width="0.8"/><rect x="3.5" y="9" width="7" height="5" fill="#c8c8c8"/><rect x="4.5" y="10" width="1.5" height="3" fill="#333"/></svg>
<div class="a tt" style="left:490px;top:118px;transform:scaleX(1.1149);transform-origin:0 0">GameTypeLayout.layout</div>
<svg class="a" style="left:687px;top:121px" width="14" height="14"><rect x="0.5" y="0.5" width="13" height="13" rx="1.5" fill="#e0613f" stroke="#c44a2a"/><path d="M4.5 4.5l5 5M9.5 4.5l-5 5" stroke="#fff" stroke-width="1.8"/></svg>
<div class="a" style="left:312px;top:141px;width:414px;height:527px;border:1px solid #a9a6a0;border-left-color:#fff;border-top-color:#fff"></div>
<div class="a" style="left:313px;top:142px;width:396px;height:479px;border-top:1px solid #383838;border-left:1px solid #383838;background:#4b4b4b;overflow:hidden"><div style="position:absolute;left:71px;top:100px;width:400px;height:400px;border-top:1px solid #d6d6d6;border-left:1px solid #d6d6d6;background:#0e0e0e"><div style="position:absolute;left:1px;top:1px;width:398px;height:398px;background:#676767;border-radius:4px 0 0 0"></div></div><div style="position:absolute;left:91px;top:130px;width:241px;height:61px;background:#787878;border-radius:6px;box-shadow:inset 0 0 0 1.5px #1e1e1e,inset 2px 2px 2px #2a2a2a"></div><div style="position:absolute;left:91px;top:130px;width:241px;height:1px;background-image:linear-gradient(90deg,#fff 1px,#000 1px,#000 6px);background-size:6px 1px"></div><div style="position:absolute;left:91px;top:130px;width:1px;height:61px;background-image:linear-gradient(#fff 1px,#000 1px,#000 6px);background-size:1px 6px"></div><div style="position:absolute;left:91px;top:190px;width:241px;height:1px;background:#f00000"></div><div style="position:absolute;left:331px;top:130px;width:1px;height:61px;background:#f00000"></div><div style="position:absolute;left:71px;top:160px;width:20px;height:1px;background:#f00000"></div><div style="position:absolute;left:211px;top:101px;width:1px;height:29px;background:#f00000"></div><div style="position:absolute;left:91px;top:150px;width:241px;text-align:center;font-size:16px;letter-spacing:0.5px;color:#e2e2e2;line-height:18px">GAME_TYPE_SOLITAIRE</div><div style="position:absolute;left:351px;top:130px;width:100px;height:61px;border:1px solid #bdbdbd;background:#6a6a6a"></div><div style="position:absolute;left:352px;top:131px;width:100px;height:59px;background:#787878;border-radius:6px;box-shadow:inset 0 0 0 1.5px #1e1e1e,inset 2px 2px 2px #2a2a2a"></div><div style="position:absolute;left:365px;top:150px;font-size:16px;letter-spacing:0.5px;color:#e2e2e2;line-height:18px">GAME</div><div style="position:absolute;left:91px;top:220px;width:400px;height:300px;border-top:1px solid #c4c4c4;border-left:1px solid #c4c4c4;background:#0e0e0e"><div style="position:absolute;left:1px;top:1px;width:398px;height:298px;background:#787878;border-radius:5px 0 0 0"></div></div></div>
<div class="sb" style="left:708px;top:143px;height:477px"><div class="sbb up" style="top:0px"></div><div class="thumb" style="top:15px;height:255px"></div><div class="sbb up" style="top:445px"></div><div class="sbb dn" style="top:461px"></div></div>
<div class="a" style="left:314px;top:620px;width:394px;height:16px;background:repeating-conic-gradient(#d8d6d1 0 25%,#eeece9 0 50%) 0 0/2px 2px"><div style="position:absolute;left:0;top:0;width:15px;height:16px;border:1px solid #9a9790;border-radius:2px;background:linear-gradient(#ebe9e5,#dcd9d3)"></div><div style="position:absolute;left:26px;top:0;width:136px;height:16px;border:1px solid #9a9790;border-radius:2px;background:linear-gradient(#ecebe7,#d8d5cf)"></div><div style="position:absolute;left:362px;top:0;width:15px;height:16px;border:1px solid #9a9790;border-radius:2px;background:linear-gradient(#ebe9e5,#dcd9d3)"></div><div style="position:absolute;left:377px;top:0;width:16px;height:16px;border:1px solid #9a9790;border-radius:2px;background:linear-gradient(#ebe9e5,#dcd9d3)"></div><svg style="position:absolute;left:0;top:0" width="394" height="16"><path d="M5 8l5-4v8z M366 8l5-4v8z M382 4l5 4l-5 4z" fill="#000"/></svg></div>
<div class="a nols" style="left:320px;top:647px;font-size:9px;line-height:12px;font-style:italic;color:#2a2a2a;letter-spacing:-0.15px;white-space:nowrap">Embedded CEGUI</div>
<div class="a" style="left:526px;top:641px;width:149px;height:24px;border:1px solid #c9c6c0;border-radius:2px;background:#fff"></div>
<div class="a" style="left:659px;top:642px;width:15px;height:22px;background:linear-gradient(90deg,#e6e4e0,#d9d6d1);border-left:1px solid #d6d3cd"></div>
<svg class="a" style="left:659px;top:642px" width="15" height="22"><path d="M3.5 9.5h7l-3.5 4z" fill="#000"/></svg>
<div class="a tt" style="left:530px;top:643px;transform:scaleX(1.1452);transform-origin:0 0">800x600</div>
<svg class="a" style="left:690px;top:644px" width="18" height="19"><ellipse cx="11" cy="16.6" rx="6" ry="0.7" fill="#000" opacity="0.15"/><path d="M4 15.3L9.2 7.6" stroke="#e8b000" stroke-width="3.2" stroke-linecap="round"/><path d="M9.2 7.6L11.5 4" stroke="#d8d8d8" stroke-width="2.4"/><path d="M6 2.8Q9 1 12.5 2.6L16.2 4.6L15.6 6.2L12 4.8Q9 3.6 6.2 4z" fill="#505050"/><path d="M11 2.5L12.5 3.6" stroke="#fff" stroke-width="1.4"/></svg>
<svg class="a" style="left:300px;top:660px" width="290" height="30"><path d="M82.5 6.5L89.5 23Q91 25.5 94.5 25.5H136.5Q140 25.5 141.5 23L147.5 6.5" fill="#d9d6d1" stroke="#000" stroke-width="1"/><path d="M147.5 6.5L154.5 23Q156 25.5 159.5 25.5H260.5Q264 25.5 265.5 23L271.5 6.5" fill="#d9d6d1" stroke="#000" stroke-width="1"/><path d="M82 6.5h190" stroke="#a9a6a0" stroke-width="1"/><path d="M12.5 6.5L19.5 23Q21 26 24.5 26H71.5Q75 26 76.5 23L82.5 6.5" fill="#fff" stroke="#000" stroke-width="1"/><path d="M13.5 6.2h68.5" stroke="#fff" stroke-width="1.2"/></svg>
<div class="a tt" style="left:324px;top:667px;transform:scaleX(1.1163);transform-origin:0 0">Visual</div>
<div class="a tt" style="left:395px;top:666px;transform:scaleX(1.0789);transform-origin:0 0">Code</div>
<div class="a tt" style="left:460px;top:666px;transform:scaleX(1.0989);transform-origin:0 0">Live Preview</div>
<svg class="a" style="left:745px;top:112px" width="61" height="7"><defs><pattern id="gp745_112" patternUnits="userSpaceOnUse" width="6" height="6"><rect x="0" y="0" width="2" height="2" fill="#a9a6a0"/><rect x="1" y="1" width="2" height="2" fill="#fff"/><rect x="3" y="3" width="2" height="2" fill="#a9a6a0"/><rect x="4" y="4" width="2" height="2" fill="#fff"/></pattern></defs><rect width="61" height="7" fill="url(#gp745_112)"/></svg>
<div class="a dtitle" style="left:820px;top:108px;transform:scaleX(1.1345);transform-origin:0 0">Project Manager</div>
<svg class="a" style="left:950px;top:112px" width="60" height="7"><defs><pattern id="gp950_112" patternUnits="userSpaceOnUse" width="6" height="6"><rect x="0" y="0" width="2" height="2" fill="#a9a6a0"/><rect x="1" y="1" width="2" height="2" fill="#fff"/><rect x="3" y="3" width="2" height="2" fill="#a9a6a0"/><rect x="4" y="4" width="2" height="2" fill="#fff"/></pattern></defs><rect width="60" height="7" fill="url(#gp950_112)"/></svg>
<div class="a dbtn" style="left:1014px;top:109px"></div><div class="a dbtn" style="left:1029px;top:109px"></div><svg class="a" style="left:1014px;top:109px" width="14" height="14"><rect x="5.5" y="2.5" width="5" height="4.5" fill="none" stroke="#000" stroke-width="1"/><rect x="5" y="2" width="6" height="1.6" fill="#000"/><rect x="3.5" y="5.5" width="5" height="5" fill="#ece9e4" stroke="#000" stroke-width="1"/><rect x="3" y="5" width="6" height="1.6" fill="#000"/></svg><svg class="a" style="left:1029px;top:109px" width="14" height="14"><path d="M3.5 3.5l7 6.5M10.5 3.5l-7 6.5" stroke="#000" stroke-width="1.7"/></svg>
<div class="a tree" style="left:751px;top:138px;width:284px;height:92px"><div class="hdr" style="left:0px;top:0px;width:266px;height:27px"></div><div class="tt" style="left:4px;top:4px;transform:scaleX(1.093);transform-origin:0 0">Name</div><svg style="position:absolute;left:243px;top:4px" width="16" height="17"><path d="M8 2.5l6 12h-12z" fill="none" stroke="#f2f1ee" stroke-width="1.2"/><path d="M8 4l-5 10" stroke="#bdbab4" stroke-width="0.8"/></svg><div class="dh" style="left:12px;top:36px;width:7px"></div><svg style="position:absolute;left:24px;top:28px" width="16" height="17"><path d="M2.5 0.5h11.5v12l-3.5 3.5h-8z" fill="#fcfcfc" stroke="#a8a8a8" stroke-width="1"/><path d="M10.5 16v-3.5h3.5" fill="#e8e8e8" stroke="#a8a8a8" stroke-width="0.8"/><rect x="0.5" y="0.5" width="3" height="15.5" fill="#d8b868" stroke="#8a6a30" stroke-width="0.8"/><path d="M1 3h2M1 6h2M1 9h2M1 12h2" stroke="#8a6a30" stroke-width="0.6"/><rect x="5.5" y="2.5" width="6.5" height="5" fill="#fff" stroke="#9a9a9a" stroke-width="0.8"/><rect x="6.5" y="3.5" width="4.5" height="3" fill="#ec3b3b"/><rect x="5.5" y="8.5" width="6.5" height="5" fill="#fff" stroke="#9a9a9a" stroke-width="0.8"/><rect x="6.5" y="9.5" width="4.5" height="3" fill="#ec3b3b"/></svg><div class="tt" style="left:46px;top:27px;transform:scaleX(1.1282);transform-origin:0 0">Vanilla.imageset</div><div class="row" style="top:46px;background:#eeeeee;width:266px"></div><div class="dh" style="left:12px;top:55px;width:7px"></div><svg style="position:absolute;left:24px;top:47px" width="16" height="17"><path d="M2.5 0.5h11.5v12l-3.5 3.5h-8z" fill="#fcfcfc" stroke="#a8a8a8" stroke-width="1"/><path d="M10.5 16v-3.5h3.5" fill="#e8e8e8" stroke="#a8a8a8" stroke-width="0.8"/><rect x="0.5" y="0.5" width="3" height="15.5" fill="#d8b868" stroke="#8a6a30" stroke-width="0.8"/><path d="M1 3h2M1 6h2M1 9h2M1 12h2" stroke="#8a6a30" stroke-width="0.6"/><rect x="5.5" y="2.5" width="6.5" height="5" fill="#fff" stroke="#9a9a9a" stroke-width="0.8"/><rect x="6.5" y="3.5" width="4.5" height="3" fill="#ec3b3b"/><rect x="5.5" y="8.5" width="6.5" height="5" fill="#fff" stroke="#9a9a9a" stroke-width="0.8"/><rect x="6.5" y="9.5" width="4.5" height="3" fill="#ec3b3b"/></svg><div class="tt" style="left:46px;top:46px;transform:scaleX(1.1081);transform-origin:0 0">Rules.imageset</div><div class="dh" style="left:12px;top:74px;width:7px"></div><svg style="position:absolute;left:24px;top:66px" width="16" height="17"><path d="M2.5 0.5h11.5v12l-3.5 3.5h-8z" fill="#fcfcfc" stroke="#a8a8a8" stroke-width="1"/><path d="M10.5 16v-3.5h3.5" fill="#e8e8e8" stroke="#a8a8a8" stroke-width="0.8"/><rect x="0.5" y="0.5" width="3" height="15.5" fill="#d8b868" stroke="#8a6a30" stroke-width="0.8"/><path d="M1 3h2M1 6h2M1 9h2M1 12h2" stroke="#8a6a30" stroke-width="0.6"/><rect x="5.5" y="2.5" width="6.5" height="5" fill="#fff" stroke="#9a9a9a" stroke-width="0.8"/><rect x="6.5" y="3.5" width="4.5" height="3" fill="#ec3b3b"/><rect x="5.5" y="8.5" width="6.5" height="5" fill="#fff" stroke="#9a9a9a" stroke-width="0.8"/><rect x="6.5" y="9.5" width="4.5" height="3" fill="#ec3b3b"/></svg><div class="tt" style="left:46px;top:65px;transform:scaleX(1.1053);transform-origin:0 0">Logos.imageset</div><div class="row" style="top:84px;background:#eeeeee;width:266px"></div><div class="dh" style="left:12px;top:93px;width:7px"></div><svg style="position:absolute;left:24px;top:85px" width="16" height="17"><path d="M2.5 0.5h11.5v12l-3.5 3.5h-8z" fill="#fcfcfc" stroke="#a8a8a8" stroke-width="1"/><path d="M10.5 16v-3.5h3.5" fill="#e8e8e8" stroke="#a8a8a8" stroke-width="0.8"/><rect x="0.5" y="0.5" width="3" height="15.5" fill="#d8b868" stroke="#8a6a30" stroke-width="0.8"/><path d="M1 3h2M1 6h2M1 9h2M1 12h2" stroke="#8a6a30" stroke-width="0.6"/><rect x="5.5" y="2.5" width="6.5" height="5" fill="#fff" stroke="#9a9a9a" stroke-width="0.8"/><rect x="6.5" y="3.5" width="4.5" height="3" fill="#ec3b3b"/><rect x="5.5" y="8.5" width="6.5" height="5" fill="#fff" stroke="#9a9a9a" stroke-width="0.8"/><rect x="6.5" y="9.5" width="4.5" height="3" fill="#ec3b3b"/></svg><div class="tt" style="left:46px;top:84px;transform:scaleX(1.127);transform-origin:0 0">Layouts.imageset</div><div class="dv" style="left:11px;top:27px;height:66px"></div><div class="sb" style="left:266px;top:0px;height:91px"><div class="sbb up" style="top:0px"></div><div class="thumb" style="top:16px;height:26px"></div><div class="sbb up" style="top:59px"></div><div class="sbb dn" style="top:75px"></div></div></div>
<svg class="a" style="left:842px;top:243px" width="98" height="4"><rect x="0" y="0" width="2" height="2" fill="#a9a6a0"/><rect x="1" y="1" width="2" height="2" fill="#fff"/><rect x="5" y="0" width="2" height="2" fill="#a9a6a0"/><rect x="6" y="1" width="2" height="2" fill="#fff"/><rect x="10" y="0" width="2" height="2" fill="#a9a6a0"/><rect x="11" y="1" width="2" height="2" fill="#fff"/><rect x="15" y="0" width="2" height="2" fill="#a9a6a0"/><rect x="16" y="1" width="2" height="2" fill="#fff"/><rect x="20" y="0" width="2" height="2" fill="#a9a6a0"/><rect x="21" y="1" width="2" height="2" fill="#fff"/><rect x="25" y="0" width="2" height="2" fill="#a9a6a0"/><rect x="26" y="1" width="2" height="2" fill="#fff"/><rect x="30" y="0" width="2" height="2" fill="#a9a6a0"/><rect x="31" y="1" width="2" height="2" fill="#fff"/><rect x="35" y="0" width="2" height="2" fill="#a9a6a0"/><rect x="36" y="1" width="2" height="2" fill="#fff"/><rect x="40" y="0" width="2" height="2" fill="#a9a6a0"/><rect x="41" y="1" width="2" height="2" fill="#fff"/><rect x="45" y="0" width="2" height="2" fill="#a9a6a0"/><rect x="46" y="1" width="2" height="2" fill="#fff"/><rect x="50" y="0" width="2" height="2" fill="#a9a6a0"/><rect x="51" y="1" width="2" height="2" fill="#fff"/><rect x="55" y="0" width="2" height="2" fill="#a9a6a0"/><rect x="56" y="1" width="2" height="2" fill="#fff"/><rect x="60" y="0" width="2" height="2" fill="#a9a6a0"/><rect x="61" y="1" width="2" height="2" fill="#fff"/><rect x="65" y="0" width="2" height="2" fill="#a9a6a0"/><rect x="66" y="1" width="2" height="2" fill="#fff"/><rect x="70" y="0" width="2" height="2" fill="#a9a6a0"/><rect x="71" y="1" width="2" height="2" fill="#fff"/><rect x="75" y="0" width="2" height="2" fill="#a9a6a0"/><rect x="76" y="1" width="2" height="2" fill="#fff"/><rect x="80" y="0" width="2" height="2" fill="#a9a6a0"/><rect x="81" y="1" width="2" height="2" fill="#fff"/><rect x="85" y="0" width="2" height="2" fill="#a9a6a0"/><rect x="86" y="1" width="2" height="2" fill="#fff"/><rect x="90" y="0" width="2" height="2" fill="#a9a6a0"/><rect x="91" y="1" width="2" height="2" fill="#fff"/><rect x="95" y="0" width="2" height="2" fill="#a9a6a0"/><rect x="96" y="1" width="2" height="2" fill="#fff"/></svg>
<svg class="a" style="left:745px;top:253px" width="48" height="7"><defs><pattern id="gp745_253" patternUnits="userSpaceOnUse" width="6" height="6"><rect x="0" y="0" width="2" height="2" fill="#a9a6a0"/><rect x="1" y="1" width="2" height="2" fill="#fff"/><rect x="3" y="3" width="2" height="2" fill="#a9a6a0"/><rect x="4" y="4" width="2" height="2" fill="#fff"/></pattern></defs><rect width="48" height="7" fill="url(#gp745_253)"/></svg>
<div class="a dtitle" style="left:807px;top:249px;transform:scaleX(1.148);transform-origin:0 0">Selection Properties</div>
<svg class="a" style="left:963px;top:253px" width="48" height="7"><defs><pattern id="gp963_253" patternUnits="userSpaceOnUse" width="6" height="6"><rect x="0" y="0" width="2" height="2" fill="#a9a6a0"/><rect x="1" y="1" width="2" height="2" fill="#fff"/><rect x="3" y="3" width="2" height="2" fill="#a9a6a0"/><rect x="4" y="4" width="2" height="2" fill="#fff"/></pattern></defs><rect width="48" height="7" fill="url(#gp963_253)"/></svg>
<div class="a dbtn" style="left:1014px;top:250px"></div><div class="a dbtn" style="left:1029px;top:250px"></div><svg class="a" style="left:1014px;top:250px" width="14" height="14"><rect x="5.5" y="2.5" width="5" height="4.5" fill="none" stroke="#000" stroke-width="1"/><rect x="5" y="2" width="6" height="1.6" fill="#000"/><rect x="3.5" y="5.5" width="5" height="5" fill="#ece9e4" stroke="#000" stroke-width="1"/><rect x="3" y="5" width="6" height="1.6" fill="#000"/></svg><svg class="a" style="left:1029px;top:250px" width="14" height="14"><path d="M3.5 3.5l7 6.5M10.5 3.5l-7 6.5" stroke="#000" stroke-width="1.7"/></svg>
<div class="a" style="left:760px;top:288px;width:235px;height:24px;border:1px solid #cfccc6;border-radius:2px;background:#fff"></div>
<div class="a tt" style="left:765px;top:290px;color:#8e8e8e;transform:scaleX(1.1412);transform-origin:0 0">Filter properties by name</div>
<div class="a" style="left:997px;top:288px;width:29px;height:25px;border:1px solid #c2bfb9;border-radius:2px;background:linear-gradient(#e8e6e2,#d6d3ce)"></div>
<svg class="a" style="left:1003px;top:292px" width="16" height="16"><path d="M3.8 9A4.3 4.3 0 1 0 8.6 4.6" fill="none" stroke="#1a6ccc" stroke-width="2.1"/><path d="M5 4.6L9.2 1.6L9.2 7.6Z" fill="#1a6ccc"/></svg>
<div class="a tree" style="left:760px;top:320px;width:265px;height:357px"><div class="hdr" style="left:0px;top:0px;width:101px"></div><div class="hdr" style="left:100px;top:0px;width:148px"></div><div class="tt" style="left:4px;top:4px;transform:scaleX(1.093);transform-origin:0 0">Name</div><div class="tt" style="left:104px;top:4px;transform:scaleX(1.1);transform-origin:0 0">Value</div><div class="row" style="top:27px;height:19px;background:#4b6983;width:248px"></div><div class="tt" style="left:3px;top:27px;color:#fff;font-weight:bold;transform:scaleX(1.1492);transform-origin:0 0">Unknown</div><div class="tt" style="left:103px;top:27px;color:#fff;transform:scaleX(1.1505);transform-origin:0 0">14 properties</div><div class="row" style="left:4px;top:46px;height:19px;width:96px;background:#eeeeee"></div><div class="tt" style="left:8px;top:46px;font-size:14px;transform:scaleX(1.144);transform-origin:0 0">TextID</div><div class="tt" style="left:8px;top:65px;font-size:14px;transform:scaleX(1.1012);transform-origin:0 0">LookNFeel</div><div class="tt" style="left:103px;top:65px;font-size:14px;transform:scaleX(1.1991);transform-origin:0 0">Vanilla/Button</div><div class="row" style="left:4px;top:82px;height:19px;width:96px;background:#eeeeee"></div><div class="tt" style="left:8px;top:82px;font-size:14px;transform:scaleX(1.1748);transform-origin:0 0">TooltipID</div><div class="tt" style="left:8px;top:101px;font-size:14px;transform:scaleX(1.1768);transform-origin:0 0">HoverImage</div><div class="row" style="left:4px;top:120px;height:19px;width:96px;background:#eeeeee"></div><div class="tt" style="left:8px;top:120px;font-size:14px;transform:scaleX(1.1844);transform-origin:0 0">NormalIm...</div><div class="tt" style="left:8px;top:139px;font-size:14px;transform:scaleX(1.1371);transform-origin:0 0">PushedIm...</div><div class="row" style="left:4px;top:158px;height:19px;width:96px;background:#eeeeee"></div><div class="tt" style="left:8px;top:158px;font-size:14px;transform:scaleX(1.1322);transform-origin:0 0">WindowRe...</div><div class="tt" style="left:103px;top:158px;font-size:14px;transform:scaleX(1.1544);transform-origin:0 0">Falagard/Button</div><div class="tt" style="left:8px;top:175px;font-size:14px;transform:scaleX(1.1509);transform-origin:0 0">HoverText...</div><div class="tt" style="left:103px;top:175px;font-size:16px;color:#777;font-style:italic;transform:scaleX(0.9367);transform-origin:0 0">FFFFFFFF</div><div class="row" style="left:4px;top:194px;height:19px;width:96px;background:#eeeeee"></div><div class="tt" style="left:8px;top:194px;font-size:14px;transform:scaleX(1.1411);transform-origin:0 0">NormalTe...</div><div class="tt" style="left:103px;top:194px;font-size:16px;color:#777;font-style:italic;transform:scaleX(0.9367);transform-origin:0 0">FFFFFFFF</div><div class="tt" style="left:8px;top:213px;font-size:14px;transform:scaleX(1.1103);transform-origin:0 0">PushedTe...</div><div class="tt" style="left:103px;top:213px;font-size:16px;color:#777;font-style:italic;transform:scaleX(0.9367);transform-origin:0 0">FFFFFFFF</div><div class="row" style="left:4px;top:232px;height:19px;width:96px;background:#eeeeee"></div><div class="tt" style="left:8px;top:232px;font-size:14px;transform:scaleX(1.154);transform-origin:0 0">DisabledT...</div><div class="tt" style="left:103px;top:232px;font-size:16px;color:#777;font-style:italic;transform:scaleX(1.0959);transform-origin:0 0">FF888888</div><div class="tt" style="left:8px;top:251px;font-size:14px;transform:scaleX(1.1397);transform-origin:0 0">UseStand...</div><div class="tt" style="left:103px;top:251px;font-size:16px;color:#777;font-style:italic;transform:scaleX(1.0938);transform-origin:0 0">True</div><div class="row" style="left:4px;top:270px;height:19px;width:96px;background:#eeeeee"></div><div class="tt" style="left:8px;top:270px;font-size:14px;transform:scaleX(1.17);transform-origin:0 0">HorzImag...</div><div class="tt" style="left:103px;top:270px;font-size:16px;color:#777;font-style:italic;transform:scaleX(1.1286);transform-origin:0 0">Stretched</div><div class="tt" style="left:8px;top:289px;font-size:14px;transform:scaleX(1.1925);transform-origin:0 0">VertImage...</div><div class="tt" style="left:103px;top:289px;font-size:16px;color:#777;font-style:italic;transform:scaleX(1.1286);transform-origin:0 0">Stretched</div><div class="row" style="top:308px;height:19px;background:#4b6983;width:248px"></div><div class="tt" style="left:3px;top:308px;color:#fff;font-weight:bold;transform:scaleX(1.1439);transform-origin:0 0">Window</div><div class="tt" style="left:103px;top:308px;color:#fff;transform:scaleX(1.1505);transform-origin:0 0">39 properties</div><div class="tt" style="left:8px;top:327px;font-size:14px;transform:scaleX(1.1143);transform-origin:0 0">ID</div><div class="tt" style="left:103px;top:327px;font-size:16px;color:#777;font-style:italic;transform:scaleX(1.1111);transform-origin:0 0">0</div><div class="row" style="left:4px;top:346px;height:19px;width:96px;background:#eeeeee"></div><div class="tt" style="left:8px;top:346px;font-size:14px;transform:scaleX(1.1514);transform-origin:0 0">Font</div><div class="tt" style="left:103px;top:346px;font-size:14px;transform:scaleX(1.1917);transform-origin:0 0">Arial-16</div><div class="dv" style="left:3px;top:46px;height:262px"></div><div class="dv" style="left:3px;top:327px;height:30px"></div><div class="sb" style="left:248px;top:0px;height:355px"><div class="sbb up" style="top:0px"></div><div class="thumb" style="top:16px;height:94px"></div><div class="sbb up" style="top:323px"></div><div class="sbb dn" style="top:339px"></div></div></div>
<svg class="a" style="left:711px;top:278px" width="12" height="20"><rect x="0" y="0" width="2" height="2" fill="#b3b0aa"/><rect x="1" y="1" width="1" height="1" fill="#fff"/><rect x="0" y="4" width="2" height="2" fill="#b3b0aa"/><rect x="1" y="5" width="1" height="1" fill="#fff"/><rect x="0" y="8" width="2" height="2" fill="#b3b0aa"/><rect x="1" y="9" width="1" height="1" fill="#fff"/><rect x="0" y="12" width="2" height="2" fill="#b3b0aa"/><rect x="1" y="13" width="1" height="1" fill="#fff"/><rect x="0" y="16" width="2" height="2" fill="#b3b0aa"/><rect x="1" y="17" width="1" height="1" fill="#fff"/><rect x="4" y="0" width="2" height="2" fill="#b3b0aa"/><rect x="5" y="1" width="1" height="1" fill="#fff"/><rect x="4" y="4" width="2" height="2" fill="#b3b0aa"/><rect x="5" y="5" width="1" height="1" fill="#fff"/><rect x="4" y="8" width="2" height="2" fill="#b3b0aa"/><rect x="5" y="9" width="1" height="1" fill="#fff"/><rect x="4" y="12" width="2" height="2" fill="#b3b0aa"/><rect x="5" y="13" width="1" height="1" fill="#fff"/><rect x="4" y="16" width="2" height="2" fill="#b3b0aa"/><rect x="5" y="17" width="1" height="1" fill="#fff"/><rect x="8" y="0" width="2" height="2" fill="#b3b0aa"/><rect x="9" y="1" width="1" height="1" fill="#fff"/><rect x="8" y="4" width="2" height="2" fill="#b3b0aa"/><rect x="9" y="5" width="1" height="1" fill="#fff"/><rect x="8" y="8" width="2" height="2" fill="#b3b0aa"/><rect x="9" y="9" width="1" height="1" fill="#fff"/><rect x="8" y="12" width="2" height="2" fill="#b3b0aa"/><rect x="9" y="13" width="1" height="1" fill="#fff"/><rect x="8" y="16" width="2" height="2" fill="#b3b0aa"/><rect x="9" y="17" width="1" height="1" fill="#fff"/></svg>
<svg class="a" style="left:399px;top:623px" width="20" height="12"><rect x="0" y="0" width="2" height="2" fill="#b3b0aa"/><rect x="1" y="1" width="1" height="1" fill="#fff"/><rect x="0" y="4" width="2" height="2" fill="#b3b0aa"/><rect x="1" y="5" width="1" height="1" fill="#fff"/><rect x="0" y="8" width="2" height="2" fill="#b3b0aa"/><rect x="1" y="9" width="1" height="1" fill="#fff"/><rect x="4" y="0" width="2" height="2" fill="#b3b0aa"/><rect x="5" y="1" width="1" height="1" fill="#fff"/><rect x="4" y="4" width="2" height="2" fill="#b3b0aa"/><rect x="5" y="5" width="1" height="1" fill="#fff"/><rect x="4" y="8" width="2" height="2" fill="#b3b0aa"/><rect x="5" y="9" width="1" height="1" fill="#fff"/><rect x="8" y="0" width="2" height="2" fill="#b3b0aa"/><rect x="9" y="1" width="1" height="1" fill="#fff"/><rect x="8" y="4" width="2" height="2" fill="#b3b0aa"/><rect x="9" y="5" width="1" height="1" fill="#fff"/><rect x="8" y="8" width="2" height="2" fill="#b3b0aa"/><rect x="9" y="9" width="1" height="1" fill="#fff"/><rect x="12" y="0" width="2" height="2" fill="#b3b0aa"/><rect x="13" y="1" width="1" height="1" fill="#fff"/><rect x="12" y="4" width="2" height="2" fill="#b3b0aa"/><rect x="13" y="5" width="1" height="1" fill="#fff"/><rect x="12" y="8" width="2" height="2" fill="#b3b0aa"/><rect x="13" y="9" width="1" height="1" fill="#fff"/><rect x="16" y="0" width="2" height="2" fill="#b3b0aa"/><rect x="17" y="1" width="1" height="1" fill="#fff"/><rect x="16" y="4" width="2" height="2" fill="#b3b0aa"/><rect x="17" y="5" width="1" height="1" fill="#fff"/><rect x="16" y="8" width="2" height="2" fill="#b3b0aa"/><rect x="17" y="9" width="1" height="1" fill="#fff"/></svg>
<svg class="a" style="left:272px;top:455px" width="12" height="20"><rect x="0" y="0" width="2" height="2" fill="#b3b0aa"/><rect x="1" y="1" width="1" height="1" fill="#fff"/><rect x="0" y="4" width="2" height="2" fill="#b3b0aa"/><rect x="1" y="5" width="1" height="1" fill="#fff"/><rect x="0" y="8" width="2" height="2" fill="#b3b0aa"/><rect x="1" y="9" width="1" height="1" fill="#fff"/><rect x="0" y="12" width="2" height="2" fill="#b3b0aa"/><rect x="1" y="13" width="1" height="1" fill="#fff"/><rect x="0" y="16" width="2" height="2" fill="#b3b0aa"/><rect x="1" y="17" width="1" height="1" fill="#fff"/><rect x="4" y="0" width="2" height="2" fill="#b3b0aa"/><rect x="5" y="1" width="1" height="1" fill="#fff"/><rect x="4" y="4" width="2" height="2" fill="#b3b0aa"/><rect x="5" y="5" width="1" height="1" fill="#fff"/><rect x="4" y="8" width="2" height="2" fill="#b3b0aa"/><rect x="5" y="9" width="1" height="1" fill="#fff"/><rect x="4" y="12" width="2" height="2" fill="#b3b0aa"/><rect x="5" y="13" width="1" height="1" fill="#fff"/><rect x="4" y="16" width="2" height="2" fill="#b3b0aa"/><rect x="5" y="17" width="1" height="1" fill="#fff"/><rect x="8" y="0" width="2" height="2" fill="#b3b0aa"/><rect x="9" y="1" width="1" height="1" fill="#fff"/><rect x="8" y="4" width="2" height="2" fill="#b3b0aa"/><rect x="9" y="5" width="1" height="1" fill="#fff"/><rect x="8" y="8" width="2" height="2" fill="#b3b0aa"/><rect x="9" y="9" width="1" height="1" fill="#fff"/><rect x="8" y="12" width="2" height="2" fill="#b3b0aa"/><rect x="9" y="13" width="1" height="1" fill="#fff"/><rect x="8" y="16" width="2" height="2" fill="#b3b0aa"/><rect x="9" y="17" width="1" height="1" fill="#fff"/></svg>
<svg class="a" style="left:1011px;top:375px" width="12" height="20"><rect x="0" y="0" width="2" height="2" fill="#b3b0aa"/><rect x="1" y="1" width="1" height="1" fill="#fff"/><rect x="0" y="4" width="2" height="2" fill="#b3b0aa"/><rect x="1" y="5" width="1" height="1" fill="#fff"/><rect x="0" y="8" width="2" height="2" fill="#b3b0aa"/><rect x="1" y="9" width="1" height="1" fill="#fff"/><rect x="0" y="12" width="2" height="2" fill="#b3b0aa"/><rect x="1" y="13" width="1" height="1" fill="#fff"/><rect x="0" y="16" width="2" height="2" fill="#b3b0aa"/><rect x="1" y="17" width="1" height="1" fill="#fff"/><rect x="4" y="0" width="2" height="2" fill="#b3b0aa"/><rect x="5" y="1" width="1" height="1" fill="#fff"/><rect x="4" y="4" width="2" height="2" fill="#b3b0aa"/><rect x="5" y="5" width="1" height="1" fill="#fff"/><rect x="4" y="8" width="2" height="2" fill="#b3b0aa"/><rect x="5" y="9" width="1" height="1" fill="#fff"/><rect x="4" y="12" width="2" height="2" fill="#b3b0aa"/><rect x="5" y="13" width="1" height="1" fill="#fff"/><rect x="4" y="16" width="2" height="2" fill="#b3b0aa"/><rect x="5" y="17" width="1" height="1" fill="#fff"/><rect x="8" y="0" width="2" height="2" fill="#b3b0aa"/><rect x="9" y="1" width="1" height="1" fill="#fff"/><rect x="8" y="4" width="2" height="2" fill="#b3b0aa"/><rect x="9" y="5" width="1" height="1" fill="#fff"/><rect x="8" y="8" width="2" height="2" fill="#b3b0aa"/><rect x="9" y="9" width="1" height="1" fill="#fff"/><rect x="8" y="12" width="2" height="2" fill="#b3b0aa"/><rect x="9" y="13" width="1" height="1" fill="#fff"/><rect x="8" y="16" width="2" height="2" fill="#b3b0aa"/><rect x="9" y="17" width="1" height="1" fill="#fff"/></svg>
<svg class="a" style="left:1029px;top:705px" width="15" height="15"><path d="M14.5 1.5L1.5 14.5M14.5 5.5L5.5 14.5M14.5 9.5L9.5 14.5" stroke="#fff" stroke-width="1.2"/><path d="M14.5 3L3 14.5M14.5 7L7 14.5M14.5 11L11 14.5" stroke="#a9a6a0" stroke-width="1"/></svg>
</body></html>
